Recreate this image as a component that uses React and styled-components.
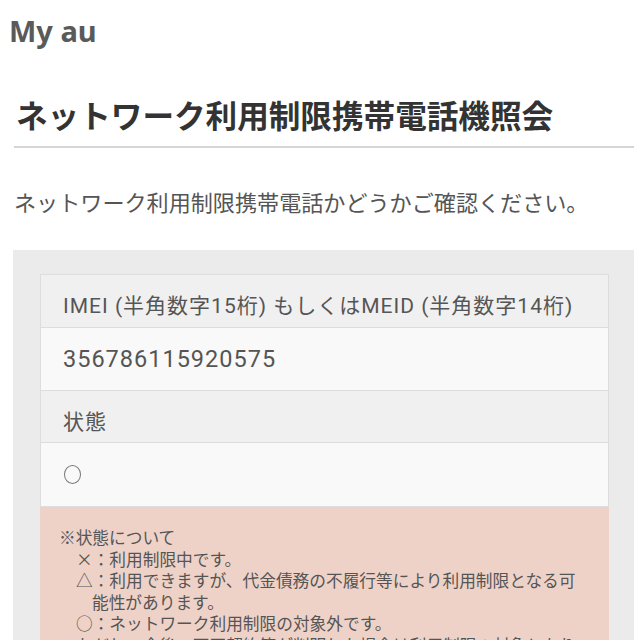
import styled, { createGlobalStyle } from "styled-components";

const GlobalStyle = createGlobalStyle`
  html, body {
    margin: 0;
    padding: 0;
    background: #ffffff;
    overflow: hidden;
  }
  body {
    font-family: Roboto, "Noto Sans CJK JP", sans-serif;
    color: #555;
  }
`;

const Page = styled.div`
  width: 640px;
  height: 640px;
  overflow: hidden;
`;

const Header = styled.header`
  padding: 15px 9px 0;
  height: 46px;
  box-sizing: border-box;
`;

const Logo = styled.div`
  font-family: "Noto Sans", "DejaVu Sans", sans-serif;
  font-weight: 700;
  font-size: 29px;
  line-height: 32px;
  color: #5a5a5a;
`;

const Main = styled.main`
  padding: 0 6px 0 14px;
`;

const Title = styled.h1`
  margin: 48px 0 0;
  padding: 0 0 12px 2px;
  font-family: "Noto Sans CJK JP", sans-serif;
  font-weight: 700;
  font-size: 31.6px;
  line-height: 40px;
  color: #333;
  border-bottom: 2px solid #d6d6d6;
  white-space: nowrap;
`;

const Lead = styled.p`
  margin: 38px 0 0;
  font-family: "Noto Sans CJK JP", sans-serif;
  font-size: 22.1px;
  line-height: 30px;
  color: #555;
  white-space: nowrap;
`;

const Panel = styled.section`
  margin: 34px 0 0 -1px;
  background: #ebebeb;
  padding: 24px 25px 0 27px;
`;

const Card = styled.div`
  border: 1px solid #dddddd;
  border-bottom: none;
`;

const Row = styled.div`
  box-sizing: border-box;
  height: ${(p) => p.$h}px;
  padding: ${(p) => (p.$head ? "16px 22px 0" : "0 22px")};
  display: flex;
  align-items: ${(p) => (p.$head ? "flex-start" : "center")};
  background: ${(p) => (p.$head ? "#f0f0f0" : "#f9f9f9")};
  border-bottom: 1px solid #dddddd;
  font-size: 21px;
  letter-spacing: 1px;
  line-height: 30px;
  color: #555;
  white-space: nowrap;
`;

const Digits = styled.span`
  font-size: 23.5px;
  letter-spacing: 1px;
`;

const Circle = styled.span`
  display: inline-block;
  width: 17px;
  height: 19px;
  border: 1.3px solid #777;
  border-radius: 50%;
  box-sizing: border-box;
  margin-left: 1px;
`;

const Note = styled.div`
  background: #efd2c7;
  padding: 20px 23px 20px 19px;
  font-family: "Noto Sans CJK JP", sans-serif;
  font-size: 16.7px;
  line-height: 21.6px;
  color: #555;
`;

const NoteItem = styled.div`
  padding-left: ${(p) => (p.$indent ? 33 : 17)}px;
  text-indent: ${(p) => (p.$indent ? -16 : 0)}px;
`;

export default function App() {
  return (
    <Page>
      <GlobalStyle />
      <Header>
        <Logo>My au</Logo>
      </Header>
      <Main>
        <Title>ネットワーク利用制限携帯電話機照会</Title>
        <Lead>ネットワーク利用制限携帯電話かどうかご確認ください。</Lead>
        <Panel>
          <Card>
            <Row $head $h={53}>IMEI (半角数字15桁) もしくはMEID (半角数字14桁)</Row>
            <Row $h={63}>
              <Digits>356786115920575</Digits>
            </Row>
            <Row $head $h={52}>状態</Row>
            <Row $h={64}>
              <Circle />
            </Row>
          </Card>
          <Note>
            <div>※状態について</div>
            <NoteItem>×：利用制限中です。</NoteItem>
            <NoteItem $indent>
              △：利用できますが、代金債務の不履行等により利用制限となる可能性があります。
            </NoteItem>
            <NoteItem>○：ネットワーク利用制限の対象外です。</NoteItem>
            <NoteItem $indent>
              　ただし、今後、不正契約等が判明した場合は利用制限の対象となります。
            </NoteItem>
          </Note>
        </Panel>
      </Main>
    </Page>
  );
}
